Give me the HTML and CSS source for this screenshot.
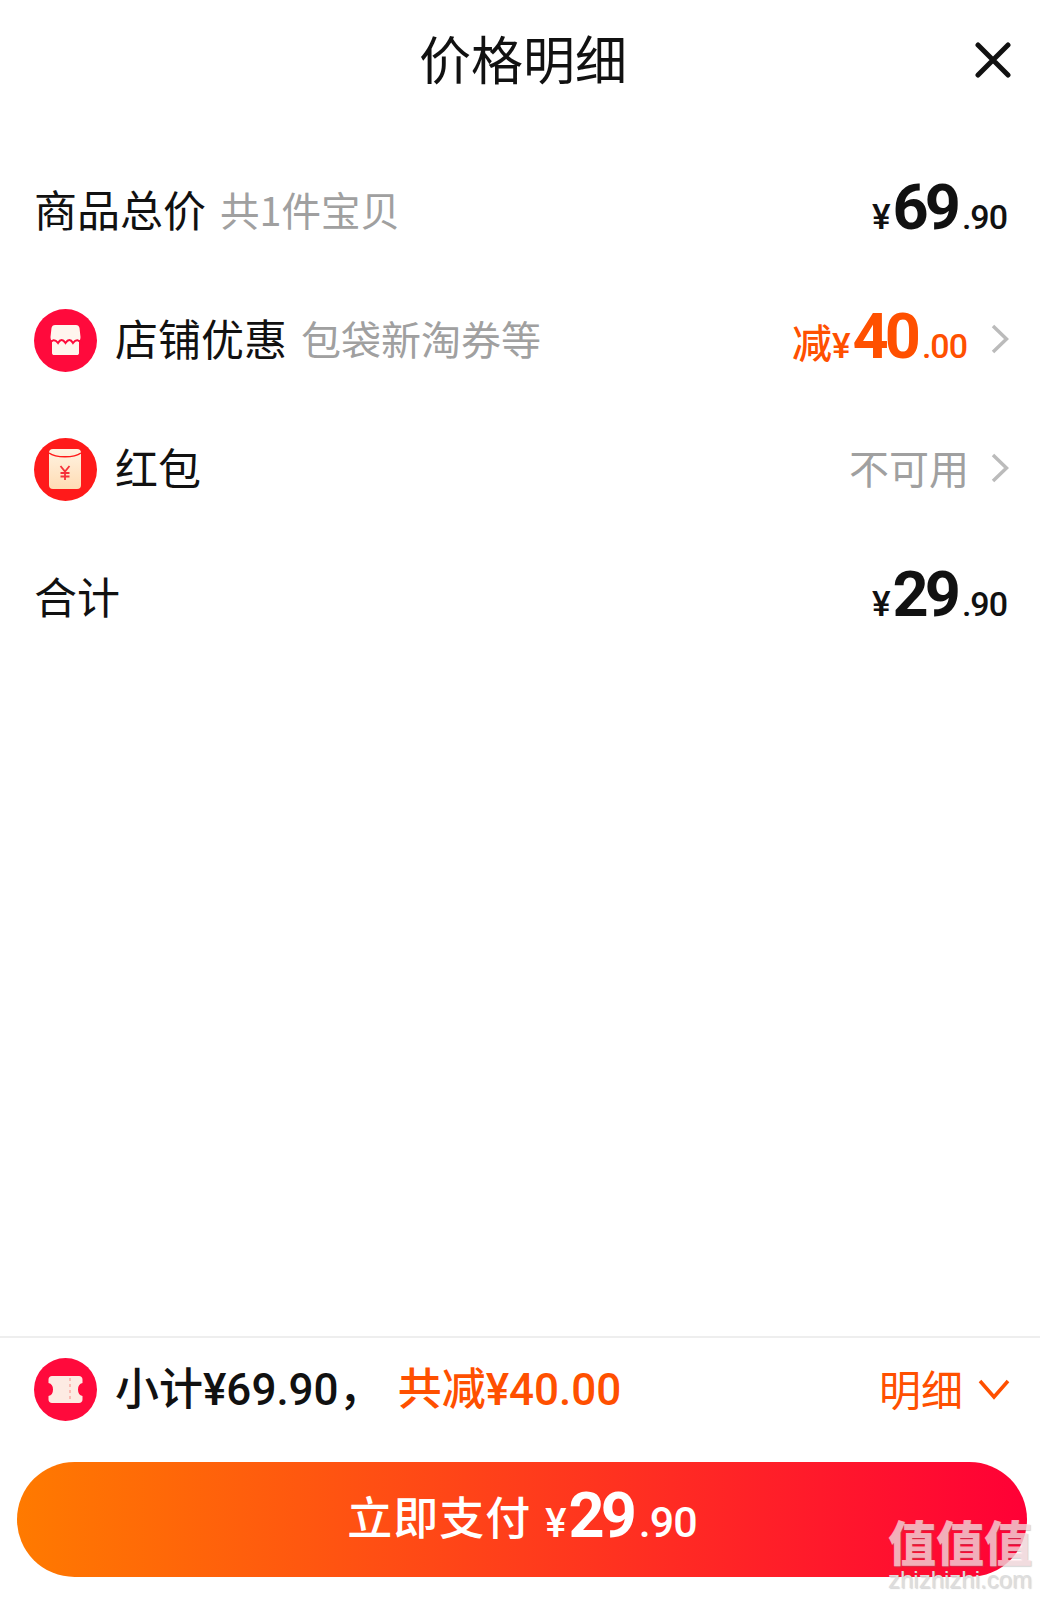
FILE: index.html
```html
<!DOCTYPE html>
<html lang="zh-CN">
<head>
  <meta charset="UTF-8">
  <meta name="viewport" content="width=device-width, initial-scale=1.0">
  <title>价格明细</title>
  <link rel="stylesheet" href="styles.css">
</head>
<body>
  <div class="page">
    <div class="header">
      <h2>价格明细</h2>
      <svg class="close" viewBox="0 0 36 36" width="36" height="36">
        <path d="M3 3L33 33M33 3L3 33" fill="none" stroke="#111" stroke-width="5" stroke-linecap="round"/>
      </svg>
    </div>

    <div class="row">
      <div class="row-left">
        <span class="label">商品总价</span>
        <span class="hint hint-small">共1件宝贝</span>
      </div>
      <div class="price">
        <span class="yen">¥</span><span class="int">69</span><span class="dec">.90</span>
      </div>
    </div>

    <div class="row">
      <div class="row-left">
        <svg class="badge" viewBox="0 0 63 63" width="63" height="63">
          <circle cx="31.5" cy="31.5" r="31.5" fill="#ff0a3c"/>
          <path d="M21 16H42C44 16 45 17 45.500 19L46.500 28C46.500 30 46 31 45 32V44C45 45.500 44 46 43 46H20C19 46 18 45.500 18 44V32C17 31 16.500 30 16.500 28L17.500 19C18 17 19 16 21 16Z" fill="#fff5ee"/>
          <path d="M15 35Q19.500 28 24 34Q27.500 28 31.500 34Q35.500 28 39 34Q43.500 28 48 35" fill="none" stroke="#ff0a3c" stroke-width="2"/>
        </svg>
        <span class="label">店铺优惠</span>
        <span class="hint">包袋新淘券等</span>
      </div>
      <div class="row-right">
        <div class="price price-orange">
          <span class="cut">减</span><span class="yen">¥</span><span class="int">40</span><span class="dec">.00</span>
        </div>
        <svg class="chevron" viewBox="0 0 18 30" width="18" height="30">
          <path d="M2 2L15.500 15L2 28" fill="none" stroke="#bbb" stroke-width="3.500"/>
        </svg>
      </div>
    </div>

    <div class="row">
      <div class="row-left">
        <svg class="badge" viewBox="0 0 63 63" width="63" height="63">
          <defs>
            <linearGradient id="packet" x1="0" y1="0" x2="0" y2="1">
              <stop offset="0" stop-color="#fff3e2"/>
              <stop offset="1" stop-color="#ffdcb4"/>
            </linearGradient>
          </defs>
          <circle cx="31.5" cy="31.5" r="31.5" fill="#ff1a1a"/>
          <rect x="15" y="11" width="32" height="40" rx="4" fill="url(#packet)"/>
          <path d="M15 15C22 20 40 20 47 15" fill="none" stroke="#ff1a1a" stroke-width="1.500"/>
          <path d="M26.500 28L31 33.500L35.500 28M31 33.500V42M26.500 35H35.500M26.500 38.500H35.500" fill="none" stroke="#f5303a" stroke-width="1.800"/>
        </svg>
        <span class="label">红包</span>
      </div>
      <div class="row-right">
        <span class="unavailable">不可用</span>
        <svg class="chevron" viewBox="0 0 18 30" width="18" height="30">
          <path d="M2 2L15.500 15L2 28" fill="none" stroke="#bbb" stroke-width="3.500"/>
        </svg>
      </div>
    </div>

    <div class="row">
      <div class="row-left">
        <span class="label">合计</span>
      </div>
      <div class="price">
        <span class="yen">¥</span><span class="int">29</span><span class="dec">.90</span>
      </div>
    </div>

    <div class="footer">
      <div class="summary">
        <div class="row-left">
          <svg class="badge" viewBox="0 0 63 63" width="63" height="63">
            <circle cx="31.5" cy="31.5" r="31.5" fill="#ff0a3c"/>
            <path d="M18 18H45C47 18 48.500 19.500 48.500 21.500V25C45.500 25.500 44 28 44 31.500C44 35 45.500 37.500 48.500 38V41.500C48.500 43.500 47 45 45 45H18C16 45 14.500 43.500 14.500 41.500V38C17.500 37.500 19 35 19 31.500C19 28 17.500 25.500 14.500 25V21.500C14.500 19.500 16 18 18 18Z" fill="#fdebe3"/>
            <path d="M36 20V43" fill="none" stroke="#f9bcb4" stroke-width="2" stroke-dasharray="3 3"/>
          </svg>
          <span class="sum-text">小计¥69.90，</span>
          <span class="sum-text sum-cut">共减¥40.00</span>
        </div>
        <div class="row-right">
          <span class="detail">明细</span>
          <svg class="chevron-down" viewBox="0 0 32 21" width="32" height="21">
            <path d="M2 2L16 18L30 2" fill="none" stroke="#ff5000" stroke-width="3.500"/>
          </svg>
        </div>
      </div>
      <button class="pay-btn">
        <span class="pay-label">立即支付</span>
        <span class="price price-white">
          <span class="yen">¥</span><span class="int">29</span><span class="dec">.90</span>
        </span>
      </button>
    </div>

    <div class="watermark">
      <span class="wm-mark">值值值</span>
      <span class="wm-site">zhizhizhi.com</span>
    </div>
  </div>
</body>
</html>
```

FILE: styles.css
```css
body {
  font-family: "Noto Sans CJK SC", "Noto Sans", sans-serif;
  margin: 0;
  padding: 0;
  background: white;
  color: #111;
}

.page {
  position: relative;
  height: 1599px;
  display: flex;
  flex-direction: column;
  overflow: hidden;
}

.header {
  height: 120px;
  margin-bottom: 27px;
  padding-left: 6px;
  position: relative;
  display: flex;
  align-items: center;
  justify-content: center;
}

h2 {
  margin: 0 0 5px;
  font-size: 52px;
  font-weight: 400;
  line-height: 1;
}

.close {
  position: absolute;
  right: 29px;
  top: 42px;
}

.row {
  height: 129px;
  padding: 0 33px 0 34px;
  display: flex;
  justify-content: space-between;
  align-items: center;
}

.row-left {
  display: flex;
  align-items: center;
}

.row-right {
  display: flex;
  align-items: center;
}

.badge {
  margin-right: 18px;
  flex-shrink: 0;
}

.label {
  font-size: 43px;
  line-height: 1;
  margin-bottom: 6px;
}

.hint {
  font-size: 40px;
  line-height: 1;
  color: #a0a0a0;
  margin-left: 14px;
  margin-bottom: 6px;
}

.hint-small {
  font-size: 39.5px;
}

.price {
  font-family: Roboto, sans-serif;
  display: flex;
  align-items: baseline;
  line-height: 1;
  margin-bottom: 9px;
}

.price .yen {
  font-size: 35px;
  font-weight: 500;
}

.price .int {
  font-size: 63px;
  font-weight: 700;
  letter-spacing: -4px;
  margin-left: 2px;
}

.price .dec {
  font-size: 34px;
  font-weight: 500;
  margin-left: 5px;
  letter-spacing: -1px;
}

.price-orange {
  color: #ff5000;
}

.price-orange .cut {
  font-family: "Noto Sans CJK SC", sans-serif;
  font-size: 40px;
  font-weight: 500;
}

.chevron {
  margin-left: 24px;
  margin-right: -2px;
  margin-bottom: 4px;
}

.unavailable {
  font-size: 40px;
  line-height: 1;
  color: #a0a0a0;
  margin-bottom: 6px;
  margin-right: -2px;
}

.footer {
  margin-top: auto;
  border-top: 2px solid #eee;
  padding-bottom: 22px;
}

.summary {
  height: 102px;
  margin-bottom: 22px;
  padding: 0 30px 0 34px;
  display: flex;
  justify-content: space-between;
  align-items: center;
}

.sum-text {
  font-size: 44px;
  font-weight: 500;
  font-family: Roboto, "Noto Sans CJK SC", sans-serif;
  line-height: 1;
  margin-top: 2px;
}

.sum-cut {
  color: #ff5000;
  margin-left: 15px;
}

.detail {
  font-size: 42px;
  line-height: 1;
  color: #ff5000;
  margin-bottom: 3px;
}

.chevron-down {
  margin-left: 15px;
}

.pay-btn {
  display: flex;
  align-items: center;
  justify-content: center;
  gap: 14px;
  width: 1010px;
  height: 115px;
  margin-left: 17px;
  padding: 0;
  border: none;
  border-radius: 58px;
  background: linear-gradient(90deg, #ff7a00, #ff0036);
  color: white;
  font-family: "Noto Sans CJK SC", sans-serif;
}

.pay-label {
  font-size: 45px;
  font-weight: 500;
  letter-spacing: 1px;
  line-height: 1;
  margin-bottom: 8px;
}

.price-white {
  margin-bottom: 8px;
}

.price-white .yen {
  font-size: 40px;
}

.price-white .dec {
  font-size: 43px;
  margin-left: 6px;
}

/* site stamp sitting over the corner of the button */
.watermark {
  position: absolute;
  right: 8px;
  bottom: 6px;
  display: flex;
  flex-direction: column;
  align-items: center;
}

.wm-mark {
  font-size: 48px;
  font-weight: 900;
  line-height: 52px;
  margin-top: -6px;
  color: rgba(255, 225, 230, 0.72);
  text-shadow: 1px 1px 1px rgba(120, 120, 120, 0.35);
}

.wm-site {
  font-family: "Liberation Sans", sans-serif;
  font-size: 24px;
  line-height: 27px;
  color: #ddd;
  text-shadow: 1px 1px 1px rgba(120, 120, 120, 0.3);
}
```
